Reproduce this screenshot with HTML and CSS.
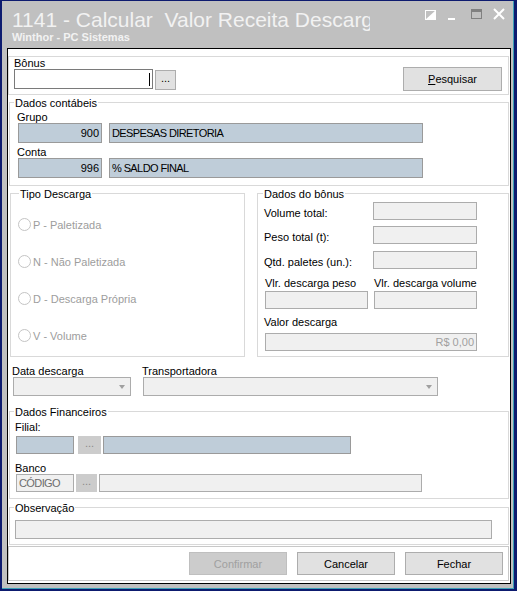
FILE: index.html
```html
<!DOCTYPE html>
<html lang="pt-BR">
<head>
<meta charset="utf-8">
<title>1141 - Calcular Valor Receita Descarga</title>
<link rel="stylesheet" href="styles.css">
</head>
<body>
<div class="window">
  <div class="titlebar">
    <div class="titles">
      <div class="title">1141 - Calcular&nbsp; Valor Receita Descarga</div>
      <div class="subtitle">Winthor - PC Sistemas</div>
    </div>
    <svg class="winctl" width="82" height="13" viewBox="0 0 82 13">
      <rect x="1.5" y="2.5" width="10" height="9" fill="none" stroke="#fff"/>
      <polygon points="12,2 12,12 1,12" fill="#fff"/>
      <rect x="24" y="10" width="7" height="2" fill="#fff"/>
      <rect x="47.5" y="1.5" width="10" height="9" fill="none" stroke="#808080"/>
      <rect x="47" y="1" width="11" height="3" fill="#808080"/>
      <path d="M70 1 L80 11 M80 1 L70 11" stroke="#fff" stroke-width="2" fill="none"/>
    </svg>
  </div>

  <div class="content">
    <div class="panel bonus">
      <div class="bonus-field">
        <div class="lbl bonus-lbl">Bônus</div>
        <div class="hrow">
          <div class="tb tb-bonus"><span class="caret"></span></div>
          <div class="dots dots-bonus">...</div>
        </div>
      </div>
      <div class="btn btn-pesq"><u>P</u>esquisar</div>
    </div>

    <fieldset class="gb gb-contab">
      <legend class="lg4">Dados contábeis</legend>
      <div class="contab-in">
        <div class="lbl">Grupo</div>
        <div class="hrow gap7 ml1">
          <div class="tb tb-blue num">900</div>
          <div class="tb tb-blue name upper">DESPESAS DIRETORIA</div>
        </div>
        <div class="lbl mt3">Conta</div>
        <div class="hrow gap7 ml1">
          <div class="tb tb-blue num">996</div>
          <div class="tb tb-blue name upper">% SALDO FINAL</div>
        </div>
      </div>
    </fieldset>

    <div class="mid">
      <fieldset class="gb gb-tipo">
        <legend class="lg8">Tipo Descarga</legend>
        <div class="tipo-in">
          <div class="radio"><i></i>P - Paletizada</div>
          <div class="radio"><i></i>N - Não Paletizada</div>
          <div class="radio"><i></i>D - Descarga Própria</div>
          <div class="radio"><i></i>V - Volume</div>
        </div>
      </fieldset>
      <fieldset class="gb gb-bonus">
        <legend class="lg5">Dados do bônus</legend>
        <div class="bon-in">
          <div class="frow">
            <div class="lbl flbl">Volume total:</div>
            <div class="tb tb18 w104"></div>
          </div>
          <div class="frow mt6">
            <div class="lbl flbl">Peso total (t):</div>
            <div class="tb tb18 w104"></div>
          </div>
          <div class="frow mt7">
            <div class="lbl flbl">Qtd. paletes (un.):</div>
            <div class="tb tb18 w104"></div>
          </div>
          <div class="vlabels">
            <div class="lbl vl1">Vlr. descarga peso</div>
            <div class="lbl">Vlr. descarga volume</div>
          </div>
          <div class="vinputs">
            <div class="tb tb18 w103"></div>
            <div class="tb tb18 w103"></div>
          </div>
          <div class="lbl mt7">Valor descarga</div>
          <div class="tb tb18 total">R$ 0,00</div>
        </div>
      </fieldset>
    </div>

    <div class="combos">
      <div class="col1">
        <div class="lbl">Data descarga</div>
        <div class="combo c1"><span class="arrow"></span></div>
      </div>
      <div class="col2">
        <div class="lbl">Transportadora</div>
        <div class="combo c2"><span class="arrow"></span></div>
      </div>
    </div>

    <fieldset class="gb gb-fin">
      <legend class="lg4">Dados Financeiros</legend>
      <div class="fin-in">
        <div class="lbl">Filial:</div>
        <div class="hrow ml1 mt3">
          <div class="tb tb18 tb-blue w58"></div>
          <div class="dots-dis dd23">...</div>
          <div class="tb tb18 tb-blue w248"></div>
        </div>
        <div class="lbl mt8">Banco</div>
        <div class="hrow ml1">
          <div class="tb tb18 w58 codigo upper">CÓDIGO</div>
          <div class="dots-dis dd21">...</div>
          <div class="tb tb18 w323"></div>
        </div>
      </div>
    </fieldset>

    <fieldset class="gb gb-obs">
      <legend class="lg4">Observação</legend>
      <div class="obs-in">
        <div class="tb obs-tb"></div>
      </div>
    </fieldset>

    <div class="btnbar">
      <div class="btn btn98 btn-dis">Confirmar</div>
      <div class="btn btn98">Cancelar</div>
      <div class="btn btn98">Fechar</div>
    </div>
  </div>
</div>
</body>
</html>
```

FILE: styles.css
```css
* { box-sizing: border-box; }

body {
  margin: 0;
  font-family: "Liberation Sans", Arial, sans-serif;
  font-size: 11px;
  line-height: 12px;
  color: #000;
}

.window {
  width: 517px;
  height: 591px;
  background: #c0c0c0;
  border-style: solid;
  border-color: #0d1b6f;
  border-width: 1px 3px 2px 2px;
  box-shadow: inset -1px -1px 0 #3c9fb6;
}

/* title bar */
.titlebar {
  display: flex;
  height: 47px;
}
.titles {
  width: 368px;
  padding: 7px 0 0 10px;
  overflow: hidden;
  white-space: nowrap;
  color: #f2f2f2;
}
.title {
  font-size: 21px;
  line-height: 24px;
}
.subtitle {
  font-size: 11px;
  font-weight: bold;
  line-height: 12px;
  margin-top: -1px;
}
.winctl {
  flex: none;
  margin: 7px 8px 0 auto;
}

/* content */
.content {
  margin: 0 3px 0 5px;
  height: 536px;
  border: 1px solid #000;
  background: #fff;
  display: flex;
  flex-direction: column;
}
.content > * { flex-shrink: 0; }

.lbl { white-space: nowrap; }
.hrow { display: flex; }
.gap7 { gap: 7px; }
.ml1 { margin-left: 1px; }
.mt3 { margin-top: 3px; }
.mt6 { margin-top: 6px; }
.mt7 { margin-top: 7px; }
.mt8 { margin-top: 8px; }

.panel { border: 1px solid #d9d9d9; }

/* text boxes */
.tb {
  height: 20px;
  border: 1px solid #acacac;
  background: #f0f0f0;
  padding: 0 2px;
  display: flex;
  align-items: center;
  white-space: nowrap;
  overflow: hidden;
}
.tb18 { height: 18px; }
.tb-blue { background: #bfcdd9; border-color: #9a9a9a; }
.upper { letter-spacing: -0.6px; }

/* bonus panel */
.bonus {
  margin: 7px 1px 0 0;
  height: 39px;
  display: flex;
  padding-left: 5px;
}
.bonus-lbl { line-height: 11px; margin-top: 1px; }
.tb-bonus {
  width: 139px;
  border-color: #7a7a7a;
  background: #fff;
  justify-content: flex-end;
  padding-right: 2px;
}
.caret { width: 1px; height: 13px; background: #000; }
.dots {
  width: 21px;
  height: 20px;
  margin: 1px 0 0 2px;
  background: #e1e1e1;
  border: 1px solid #adadad;
  text-align: center;
  line-height: 14px;
}

.btn {
  display: flex;
  align-items: center;
  justify-content: center;
  background: #e1e1e1;
  border: 1px solid #adadad;
  white-space: nowrap;
}
.btn-pesq {
  width: 99px;
  height: 24px;
  margin: 10px 6px 0 auto;
}

/* group boxes */
.gb {
  border: 1px solid #d9d9d9;
  margin: 0;
  padding: 0;
  min-width: 0;
}
.gb legend {
  padding: 2px 1px 0;
  line-height: 13px;
  white-space: nowrap;
}
.lg4 { margin-left: 4px; }
.lg5 { margin-left: 5px; }
.lg8 { margin-left: 8px; }

.gb-contab { margin: 0 1px 0 1px; height: 91px; }
.contab-in { padding: 1px 0 0 7px; }
.num { width: 84px; justify-content: flex-end; }
.name { width: 314px; }

.mid {
  display: flex;
  margin: 0 0 0 2px;
  height: 171px;
}
.gb-tipo { width: 235px; }
.tipo-in { padding: 5px 0 0 7px; }
.radio {
  height: 37px;
  display: flex;
  align-items: center;
  color: #9d9d9d;
  white-space: nowrap;
}
.radio i {
  width: 13px;
  height: 13px;
  border: 1px solid #c4c4c4;
  border-radius: 50%;
  background: #fff;
  margin-right: 2px;
}

.gb-bonus { width: 252px; margin-left: 12px; }
.bon-in { padding: 1px 0 0 6px; }
.frow { display: flex; height: 18px; }
.flbl { width: 109px; padding-top: 5px; }
.w104 { width: 104px; }
.w103 { width: 103px; }
.vlabels { display: flex; margin: 8px 0 0 1px; }
.vl1 { width: 109px; }
.vinputs { display: flex; gap: 6px; margin: 2px 0 0 1px; }
.total {
  width: 212px;
  margin: 5px 0 0 1px;
  justify-content: flex-end;
  color: #a0a0a0;
}

/* combos */
.combos {
  display: flex;
  margin: 8px 0 0 4px;
}
.col1 { width: 130px; }
.combo {
  height: 19px;
  margin-left: 1px;
  border: 1px solid #acacac;
  background: #f0f0f0;
  display: flex;
  align-items: center;
  justify-content: flex-end;
  padding-right: 5px;
}
.c1 { width: 118px; }
.c2 { width: 295px; }
.arrow {
  width: 0;
  height: 0;
  border-left: 3.5px solid transparent;
  border-right: 3.5px solid transparent;
  border-top: 4px solid #a0a0a0;
}

/* financeiros */
.gb-fin { margin: 8px 1px 0 1px; height: 95px; }
.fin-in { padding: 2px 0 0 5px; }
.w58 { width: 58px; }
.w248 { width: 248px; margin-left: 2px; }
.w323 { width: 323px; margin-left: 2px; }
.codigo { color: #6d6d6d; }
.dots-dis {
  height: 18px;
  background: #cccccc;
  border: 1px solid #cccccc;
  color: #8a8a8a;
  text-align: center;
  line-height: 13px;
}
.dd23 { width: 23px; margin-left: 4px; }
.dd21 { width: 21px; margin-left: 2px; }

/* observacao */
.gb-obs { margin: 1px 1px 0 1px; height: 45px; }
.obs-in { padding: 5px 0 0 5px; }
.obs-tb { width: 477px; height: 19px; }

/* buttons */
.btnbar {
  margin: 1px 1px 0 0;
  height: 35px;
  border: 1px solid #c8c8c8;
  display: flex;
  justify-content: flex-end;
  gap: 10px;
  padding: 5px 5px 0 0;
}
.btn98 { width: 98px; height: 23px; }
.btn-dis {
  background: #cccccc;
  border-color: #bfbfbf;
  color: #a0a0a0;
}
```
